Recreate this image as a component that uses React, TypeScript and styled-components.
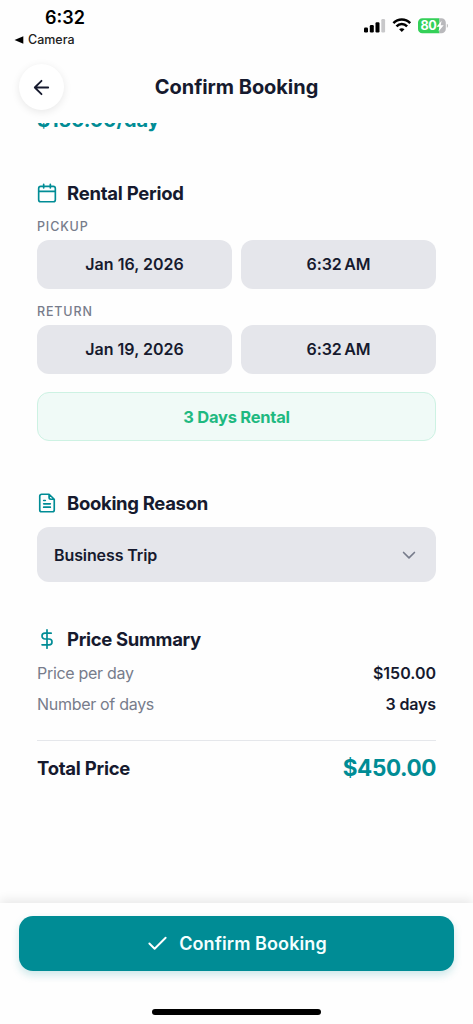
import React from 'react';
import styled, { createGlobalStyle } from 'styled-components';

const ink = '#161a2e';
const teal = '#008c95';
const muted = '#777c8b';

const GlobalStyle = createGlobalStyle`
  * { box-sizing: border-box; }
  body { margin: 0; background: #fefefe; }
`;

const Screen = styled.div`
  width: 473px;
  height: 1024px;
  display: flex;
  flex-direction: column;
  overflow: hidden;
  background: #fefefe;
  color: ${ink};
  font-family: Inter, 'Liberation Sans', sans-serif;
`;

const Text = styled.span<{ $size: number; $weight?: number; $color?: string; $track?: number }>`
  font-size: ${(p) => p.$size}px;
  font-weight: ${(p) => p.$weight ?? 600};
  color: ${(p) => p.$color ?? ink};
  letter-spacing: ${(p) => p.$track ?? 0}px;
  line-height: 24px;
  white-space: pre;
`;

const StatusBar = styled.div`
  height: 52px;
  flex: none;
  display: flex;
  justify-content: space-between;
  padding: 6px 25px 0 14px;
`;

const StatusLeft = styled.div`
  display: flex;
  flex-direction: column;
`;

const Clock = styled.div`
  height: 25px;
  padding-left: 31px;
  display: flex;
`;

const BackToApp = styled.div`
  height: 18px;
  display: flex;
  align-items: center;
  gap: 4px;
`;

const StatusIcons = styled.div`
  height: 40px;
  display: flex;
  align-items: center;
`;

const Header = styled.header`
  height: 71px;
  flex: none;
  display: grid;
  grid-template-columns: 46px 1fr 46px;
  align-items: start;
  padding: 12px 19px 0 19px;
  text-align: center;
`;

const BackButton = styled.button`
  width: 45px;
  height: 46px;
  padding: 0;
  border: 0;
  border-radius: 50%;
  background: #fff;
  box-shadow: 0 2px 9px rgba(0, 0, 0, 0.09);
  display: flex;
  align-items: center;
  justify-content: center;
`;

const Title = styled.h1`
  margin: 0;
  height: 46px;
  display: flex;
  align-items: center;
  justify-content: center;
`;

const Content = styled.main`
  flex: 1;
  min-height: 0;
  overflow: hidden;
  padding: 0 37px;
`;

const DailyRate = styled.div`
  height: 24px;
  display: flex;
  margin-top: -15px;
`;

const Section = styled.section<{ $gap: number }>`
  margin-top: ${(p) => p.$gap}px;
`;

const Heading = styled.h2`
  margin: 0;
  height: 24px;
  display: flex;
  align-items: center;
  gap: 10px;
`;

const Label = styled.div<{ $gap: number }>`
  height: 23px;
  display: flex;
  margin-top: ${(p) => p.$gap}px;
`;

const FieldRow = styled.div`
  display: grid;
  grid-template-columns: 195px 195px;
  gap: 9px;
  margin-top: 2px;
`;

const Field = styled.div`
  height: 49px;
  padding-bottom: 1px;
  border-radius: 12px;
  background: #e5e6eb;
  display: flex;
  align-items: center;
  justify-content: center;
`;

const Duration = styled.div`
  height: 49px;
  margin-top: 18px;
  border: 1.5px solid #cdf2e3;
  border-radius: 12px;
  background: #f0faf7;
  display: flex;
  align-items: center;
  justify-content: center;
`;

const Select = styled.div`
  height: 55px;
  margin-top: 12px;
  padding: 0 17px 0 17px;
  border-radius: 12px;
  background: #e5e6eb;
  display: flex;
  align-items: center;
  justify-content: space-between;
`;

const PriceRow = styled.div<{ $gap: number }>`
  height: 24px;
  margin-top: ${(p) => p.$gap}px;
  display: flex;
  align-items: center;
  justify-content: space-between;
`;

const Divider = styled.div`
  height: 1px;
  margin-top: 24px;
  background: #e5e7eb;
`;

const Footer = styled.footer`
  height: 121px;
  flex: none;
  padding: 13px 19px 0;
  background: #fefefe;
  box-shadow: 0 -3px 10px rgba(0, 0, 0, 0.09);
  display: flex;
  flex-direction: column;
  align-items: center;
`;

const ConfirmButton = styled.button`
  width: 435px;
  height: 55px;
  padding: 0;
  border: 0;
  border-radius: 14px;
  background: ${teal};
  box-shadow: 0 4px 9px rgba(0, 140, 149, 0.2);
  font-family: inherit;
  display: flex;
  align-items: center;
  justify-content: center;
  gap: 10px;
`;

const HomeIndicator = styled.div`
  width: 169px;
  height: 6px;
  margin-top: 38px;
  border-radius: 3px;
  background: #000;
`;

const Stroke = ({ size, color, width = 2, d }: { size: number; color: string; width?: number; d: string }) => (
  <svg width={size} height={size} viewBox="0 0 24 24" fill="none" stroke={color} strokeWidth={width} strokeLinecap="round" strokeLinejoin="round">
    <path d={d} />
  </svg>
);

const SystemIcons = () => (
  <svg width="84" height="18" viewBox="0 0 84 18">
    <rect x="0" y="10.5" width="4" height="5" rx="1.2" fill="#000" />
    <rect x="5.8" y="8.1" width="4" height="7.4" rx="1.2" fill="#000" />
    <rect x="11.5" y="5.3" width="4" height="10.2" rx="1.2" fill="#000" />
    <rect x="17.3" y="2" width="3.8" height="13.5" rx="1.2" fill="#c8c8ca" />
    <g fill="none" stroke="#000" strokeWidth="2.5">
      <path d="M29.4 6.2C34.2 1.3 41.4 1.3 46.2 6.2" />
      <path d="M32.5 9.4c3-3.2 7.6-3.2 10.6 0" />
    </g>
    <path d="M37.8 15l-2.7-2.8c1.6-1.4 3.8-1.4 5.4 0z" fill="#000" />
    <path d="M58.3 1.3h17.2v15H58.3A4.3 4.3 0 0 1 54 12V5.6a4.3 4.3 0 0 1 4.3-4.3z" fill="#34d058" />
    <path d="M75.5 1.3h2a4.3 4.3 0 0 1 4.3 4.3V12a4.3 4.3 0 0 1-4.3 4.3h-2z" fill="#b9b9bc" />
    <path d="M82.8 6.8c1.5.5 1.5 3.5 0 4z" fill="#bbb" />
    <text x="56.4" y="13.4" fontFamily="Inter" fontSize="12.6" fontWeight="700" fill="#fff" letterSpacing="-.3">80</text>
    <path d="M77.6 3.7l-5 6h2.9l-1 4.8 5.2-6.3h-3z" fill="#fff" />
  </svg>
);

const calendar = 'M8 1.5v4.500M16 1.5v4.500M2 10h20M4.500 4h15A2.5 2.5 0 0 1 22 6.500v13.500a2.5 2.5 0 0 1-2.5 2.5h-15A2.5 2.5 0 0 1 2 20V6.500a2.5 2.5 0 0 1 2.5-2.5z';
const fileText = 'M14.5 1.5H5.5a2.2 2.2 0 0 0-2.2 2.2v16.6a2.2 2.2 0 0 0 2.2 2.2h13a2.2 2.2 0 0 0 2.2-2.2V7.5zM14.5 1.5v4a2 2 0 0 0 2 2h4.2M16 13H8M16 17H8M10 9H8';
const dollar = 'M12 1v22M17 5H9.5a3.5 3.5 0 0 0 0 7h5a3.5 3.5 0 0 1 0 7H6';

export default function App() {
  return (
    <>
      <GlobalStyle />
      <Screen>
        <StatusBar>
          <StatusLeft>
            <Clock><Text $size={18} $color="#000">6:32</Text></Clock>
            <BackToApp>
              <svg width="10" height="8" viewBox="0 0 10 8"><path d="M.5 4L9.3.2v7.6z" fill="#000" /></svg>
              <Text $size={12.5} $weight={500} $color="#222">Camera</Text>
            </BackToApp>
          </StatusLeft>
          <StatusIcons><SystemIcons /></StatusIcons>
        </StatusBar>
        <Header>
          <BackButton aria-label="Back">
            <Stroke size={23} width={1.9} color={ink} d="M19 12H5M12 19l-7-7 7-7" />
          </BackButton>
          <Title><Text $size={20} $weight={700} $track={-0.05}>Confirm Booking</Text></Title>
        </Header>
        <Content>
          <DailyRate><Text $size={20} $weight={700} $color={teal} $track={-0.15}>$150.00/day</Text></DailyRate>
          <Section $gap={49}>
            <Heading>
              <Stroke size={20} color={teal} d={calendar} />
              <Text $size={18.5} $weight={700} $track={-0.25}>Rental Period</Text>
            </Heading>
            <Label $gap={10}><Text $size={12.5} $weight={500} $color={muted} $track={0.85}>PICKUP</Text></Label>
            <FieldRow>
              <Field><Text $size={16}>Jan 16, 2026</Text></Field>
              <Field><Text $size={16} $track={-0.1}>{'6:32\u2009AM'}</Text></Field>
            </FieldRow>
            <Label $gap={11}><Text $size={12.5} $weight={500} $color={muted} $track={0.85}>RETURN</Text></Label>
            <FieldRow>
              <Field><Text $size={16}>Jan 19, 2026</Text></Field>
              <Field><Text $size={16} $track={-0.1}>{'6:32\u2009AM'}</Text></Field>
            </FieldRow>
            <Duration><Text $size={16.5} $weight={700} $color="#1fb981" $track={-0.25}>3 Days Rental</Text></Duration>
          </Section>
          <Section $gap={50}>
            <Heading>
              <Stroke size={20} color={teal} d={fileText} />
              <Text $size={18.5} $weight={700} $track={-0.32}>Booking Reason</Text>
            </Heading>
            <Select>
              <Text $size={16} $weight={600} $track={-0.1}>Business Trip</Text>
              <Stroke size={20} color={muted} d="M5.5 9l6.5 6.5L18.500 9" />
            </Select>
          </Section>
          <Section $gap={45}>
            <Heading>
              <Stroke size={20} color={teal} d={dollar} />
              <Text $size={18.5} $weight={700} $track={-0.32}>Price Summary</Text>
            </Heading>
            <PriceRow $gap={10}>
              <Text $size={16} $weight={400} $color={muted} $track={-0.3}>Price per day</Text>
              <Text $size={16}>$150.00</Text>
            </PriceRow>
            <PriceRow $gap={7}>
              <Text $size={16} $weight={400} $color={muted} $track={-0.3}>Number of days</Text>
              <Text $size={16} $track={-0.15}>3 days</Text>
            </PriceRow>
            <Divider />
            <PriceRow $gap={15}>
              <Text $size={18.5} $weight={700} $track={-0.25}>Total Price</Text>
              <Text $size={22.5} $weight={700} $color={teal} $track={-0.4}>$450.00</Text>
            </PriceRow>
          </Section>
        </Content>
        <Footer>
          <ConfirmButton>
            <Stroke size={23} color="#fff" d="M20.500 6L9 17.500l-5.500-5.500" />
            <Text $size={18} $color="#f4ffff" $track={0.1}>Confirm Booking</Text>
          </ConfirmButton>
          <HomeIndicator />
        </Footer>
      </Screen>
    </>
  );
}
